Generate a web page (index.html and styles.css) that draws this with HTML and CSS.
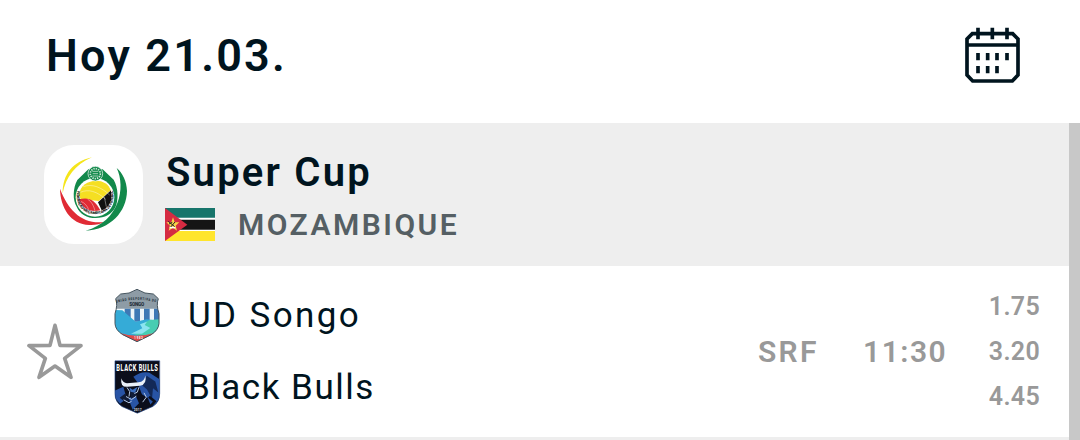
FILE: index.html
```
<!DOCTYPE html>
<html lang="es">
<head>
    <meta charset="UTF-8">
    <meta name="viewport" content="width=device-width, initial-scale=1.0">
    <title>Super Cup - Mozambique</title>
    <link rel="stylesheet" href="styles.css">
</head>
<body>

    <!-- Day Header -->
    <header class="day-header">
        <h1>Hoy 21.03.</h1>
        <button class="calendar-btn" aria-label="Calendario">
            <svg width="55" height="56" viewBox="45 36 165 168" fill="none" stroke="#00141e" stroke-width="11">
                <path d="M67 56H188L204 72V180L187 198H68L51 180V72Z"/>
                <path d="M51 90H204M84 38V73M127 38V73M171 38V73"/>
                <path d="M84 114V136M113 114V136M141 114V136M171 114V136M84 153V175M113 153V175M141 153V175"/>
            </svg>
        </button>
    </header>

    <div class="scroll-area">
        <main>
            <!-- League Section -->
            <section class="league">
                <div class="league-logo">
                    <svg width="99" height="99" viewBox="12 15 297 297">
                        <path d="M156 52C98 65 68 103 68 160C78 111 104 75 156 52Z" fill="#f5e51b"/>
                        <path d="M60 146C61 202 91 253 148 255C165 256 181 252 193 246C126 254 85 211 60 146Z" fill="#e02b35"/>
                        <path d="M230 84C258 142 239 244 137 272C211 269 260 215 261 153C260 124 248 99 230 84Z" fill="#12894b"/>
                        <path d="M145 88L112 120C98 145 98 181 110 200C120 223 141 234 167 234C195 234 215 223 226 202C236 180 235 143 221 119L188 88Z" fill="#12894b"/>
                        <circle cx="165" cy="172" r="58" fill="#fff"/>
                        <path d="M117 166C122 111 202 110 212 151L176 183L122 177Z" fill="#f5df22"/>
                        <path d="M117 178C145 170 164 178 181 211C150 219 124 204 117 178Z" fill="#e02b35"/>
                        <path d="M174 187L213 151V181C208 197 197 207 185 211Z" fill="#111"/>
                        <path d="M121 157C145 146 171 154 197 178M130 140C157 130 184 142 209 165M143 178C153 183 161 196 165 213M122 184C134 188 142 198 146 209M193 171L199 200" fill="none" stroke="#fff" stroke-opacity="0.6" stroke-width="2"/>
                        <circle cx="166" cy="101" r="22" fill="#12894b" stroke="#fff" stroke-width="2"/>
                        <circle cx="166" cy="101" r="15" fill="none" stroke="#c9e5d3" stroke-width="5" stroke-dasharray="4 3"/>
                        <path d="M157 94H175M158 101H174M157 108H175" stroke="#9dd0b1" stroke-width="3"/>
                        <path id="ring" d="M112 153C104 195 130 222 165 222C202 222 229 194 218 151" fill="none"/>
                        <text class="ring-text"><textPath href="#ring" textLength="205">FEDERAÇÃO MOÇAMBICANA DE FUTEBOL</textPath></text>
                    </svg>
                </div>
                <div class="league-info">
                    <h2>Super Cup</h2>
                    <div class="country">
                        <svg width="50" height="33" viewBox="0 0 150 99">
                            <path d="M0 0H150V99H0Z" fill="#fff"/>
                            <path d="M0 0H150V29H0Z" fill="#17756b"/>
                            <path d="M0 35H150V65H0Z" fill="#151515"/>
                            <path d="M0 69H150V99H0Z" fill="#ffe52c"/>
                            <path d="M0 0L67 50L0 99Z" fill="#d52b42"/>
                            <path d="M24 28L29 43H43L32 53L36 68L24 59L11 68L15 53L4 43H19Z" fill="#f8d64a"/>
                            <path d="M14 56H31V61H14Z" fill="#fff"/>
                            <path d="M10 40L29 56M30 42L17 57M12 48L22 43" stroke="#222" stroke-width="3"/>
                        </svg>
                        <span>MOZAMBIQUE</span>
                    </div>
                </div>
            </section>

            <!-- Match Row -->
            <section class="match">
                <svg class="star" width="56" height="58" viewBox="36 37 168 174">
                    <path d="M120 44L135 104L198 105L149 143L168 200L120 166L72 200L91 143L42 105L105 104Z" fill="none" stroke="#999" stroke-width="11" stroke-linejoin="round"/>
                </svg>

                <div class="teams">
                    <div class="team home">
                        <svg width="48" height="57" viewBox="24 22 144 171">
                            <clipPath id="songoShield">
                                <path d="M47 43Q73 44 96 29Q119 44 145 43L160 57Q153 75 162 102V132Q160 151 139 165L96 186L53 165Q31 151 30 132V102Q39 75 32 57Z"/>
                            </clipPath>
                            <g clip-path="url(#songoShield)">
                                <path d="M24 22H168V90H24Z" fill="#8e9ca6"/>
                                <path d="M24 87H168V126H24Z" fill="#edf4f8"/>
                                <path d="M59 87H77V126H59ZM88 87H105V126H88ZM117 87H134V126H117ZM147 87H168V126H147Z" fill="#3e78b5"/>
                                <path d="M24 91L52 92L92 126L125 119L168 124V192H24Z" fill="#35abd7"/>
                                <path d="M168 118L134 121L107 135L119 147L87 166H168Z" fill="#48cdb2"/>
                                <path d="M78 162L112 146L105 134L126 126L119 136L136 145L111 162Z" fill="#8be4f0"/>
                                <path d="M36 158Q96 178 156 158V190H36Z" fill="#df4b48"/>
                            </g>
                            <path d="M47 43Q73 44 96 29Q119 44 145 43L160 57Q153 75 162 102V132Q160 151 139 165L96 186L53 165Q31 151 30 132V102Q39 75 32 57Z" fill="none" stroke="#45545e" stroke-width="3"/>
                            <path id="songoArc" d="M34 70Q96 51 160 70" fill="none"/>
                            <text class="songo-text arc"><textPath href="#songoArc" textLength="122" lengthAdjust="spacingAndGlyphs">UNIÃO DESPORTIVA DO</textPath></text>
                            <text class="songo-text" x="73" y="80" textLength="47">SONGO</text>
                            <text class="shield-year" x="88" y="179">1982</text>
                        </svg>
                        <span>UD Songo</span>
                    </div>
                    <div class="team">
                        <svg width="48" height="57" viewBox="24 28.5 144 171">
                            <clipPath id="bullsShield">
                                <path d="M30 34H164V132Q164 158 143 171L97 191L51 171Q30 158 30 132Z"/>
                            </clipPath>
                            <g clip-path="url(#bullsShield)">
                                <path d="M24 28H168V196H24Z" fill="#0b0e1b"/>
                                <path d="M85 82Q107 64 132 69L166 91V156L140 174L128 145L111 136L98 100Z" fill="#2854a5"/>
                                <path d="M30 123L55 112L65 147L45 163L30 145ZM70 147L91 136L102 161L83 181Z" fill="#2854a5"/>
                                <path d="M125 79L151 96L160 129L144 116L141 148L126 120L112 108Z" fill="#132957"/>
                                <path d="M103 133L121 148L110 171M132 142L149 156L136 171" fill="none" stroke="#0b0e1b" stroke-width="8"/>
                                <path d="M72 119L99 122L91 142L79 147ZM44 145L61 132L75 154L61 158Z" fill="#101c38"/>
                                <path d="M49 86Q45 113 67 112L105 109Q127 104 121 78Q118 98 101 98L66 101Q53 100 49 86Z" fill="#e9f0f8"/>
                                <path d="M66 114L74 126L72 141M102 113L97 128L88 132M63 141L80 150L94 140M56 151L72 160L80 155M117 130L124 143L113 158" fill="none" stroke="#b7cae5" stroke-width="3"/>
                                <path d="M73 114L83 121L98 112L90 130L77 127Z" fill="#3b6fc0"/>
                            </g>
                            <path d="M30 34H164V132Q164 158 143 171L97 191L51 171Q30 158 30 132Z" fill="none" stroke="#1c3f7f" stroke-width="2"/>
                            <text class="bulls-text" transform="translate(34 64) scale(1 1.55)" textLength="126" lengthAdjust="spacingAndGlyphs">BLACK BULLS</text>
                            <text class="shield-year" x="87" y="184">2017</text>
                        </svg>
                        <span>Black Bulls</span>
                    </div>
                </div>

                <div class="channel">SRF</div>
                <div class="time">11:30</div>
                <div class="odds">
                    <span>1.75</span>
                    <span>3.20</span>
                    <span>4.45</span>
                </div>
            </section>
        </main>
        <div class="scrollbar"></div>
    </div>

</body>
</html>
```
FILE: styles.css
```
/* General Styles */
* {
    margin: 0;
    padding: 0;
    box-sizing: border-box;
}
body {
    background-color: #fff;
    color: #00141e;
    font-family: Roboto, "Liberation Sans", sans-serif;
    height: 440px;
    overflow: hidden;
}

/* Day Header */
.day-header {
    display: flex;
    justify-content: space-between;
    align-items: center;
    height: 123px;
    padding: 0 60px 13px 46px;
}
.day-header h1 {
    font-size: 45px;
    font-weight: 600;
    letter-spacing: 2.2px;
}
.calendar-btn {
    display: block;
    height: 56px;
    border: none;
    background: none;
    cursor: pointer;
}
svg {
    display: block;
    flex-shrink: 0;
}

/* Scroll Area */
.scroll-area {
    display: flex;
    height: 317px;
}
main {
    flex: 1;
}
.scrollbar {
    width: 11px;
    background-color: #c8c8c8;
}

/* League Section */
.league {
    display: flex;
    align-items: center;
    height: 143px;
    padding-left: 44px;
    background-color: #eee;
}
.league-logo {
    width: 99px;
    height: 99px;
    border-radius: 30px;
    background-color: #fff;
    overflow: hidden;
}
.league-info {
    margin-left: 23px;
}
.league-info h2 {
    font-size: 40px;
    font-weight: 600;
    line-height: 48px;
    letter-spacing: 2.2px;
}
.country {
    display: flex;
    align-items: center;
    margin: 11px 0 0 -1px;
    font-size: 30px;
    font-weight: 600;
    line-height: 33px;
    letter-spacing: 2.5px;
    color: #555f64;
}
.country span {
    margin-left: 23px;
}

/* Match Row */
.match {
    display: flex;
    align-items: center;
    height: 174px;
    padding: 0 29px 0 27px;
    border-bottom: 3px solid #eee;
}
.teams {
    width: 610px;
    margin-left: 30px;
}
.team {
    display: flex;
    align-items: center;
    height: 72px;
    font-size: 35px;
    letter-spacing: 1.5px;
}
.team.home {
    letter-spacing: 2.4px;
}
.team span {
    margin-left: 27px;
}
.channel,
.time {
    font-size: 30px;
    font-weight: 600;
    letter-spacing: 1.5px;
    color: #999;
}
.channel {
    width: 105px;
    margin-left: 35px;
    letter-spacing: 2.3px;
}
.odds {
    display: flex;
    flex-direction: column;
    margin-left: auto;
    text-align: right;
    font-size: 25px;
    font-weight: 600;
    line-height: 45px;
    letter-spacing: 0.3px;
    color: #999;
}

/* Badge Lettering */
.ring-text {
    font-size: 11px;
    font-weight: 900;
    fill: #111;
}
.songo-text {
    font-size: 14px;
    font-weight: 900;
    fill: #202d38;
}
.songo-text.arc {
    font-size: 11px;
}
.bulls-text {
    font-size: 18px;
    font-weight: 800;
    fill: #fff;
}
.shield-year {
    font-size: 8px;
    font-weight: 700;
    fill: #fff;
}
```
